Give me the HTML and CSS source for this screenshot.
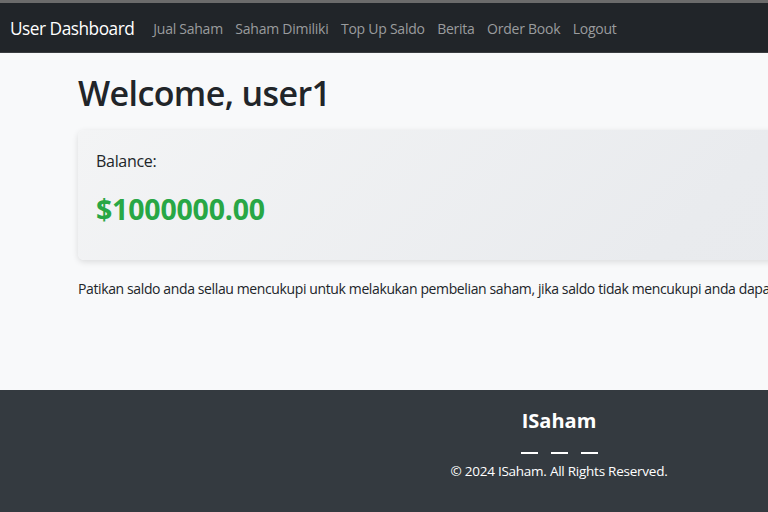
FILE: index.html
```html
<!DOCTYPE html>
<html lang="id">
<head>
<meta charset="utf-8">
<title>User Dashboard</title>
<link rel="stylesheet" href="styles.css">
</head>
<body>
<div class="page">
  <nav class="navbar">
    <a class="brand" href="#">User Dashboard</a>
    <ul class="nav-links">
      <li><a href="#">Jual Saham</a></li>
      <li><a href="#">Saham Dimiliki</a></li>
      <li><a href="#">Top Up Saldo</a></li>
      <li><a href="#">Berita</a></li>
      <li><a href="#">Order Book</a></li>
      <li><a href="#">Logout</a></li>
    </ul>
  </nav>
  <main class="main">
    <h1 class="title">Welcome, user1</h1>
    <div class="card">
      <p class="label">Balance:</p>
      <p class="amount">$1000000.00</p>
    </div>
    <p class="note">Patikan saldo anda sellau mencukupi untuk melakukan pembelian saham, jika saldo tidak mencukupi anda dapat melakukan top up saldo.</p>
  </main>
  <footer class="footer">
    <h2 class="footer-brand">ISaham</h2>
    <div class="socials"><span></span><span></span><span></span></div>
    <p class="copy">© 2024 ISaham. All Rights Reserved.</p>
  </footer>
</div>
</body>
</html>
```
FILE: styles.css
```css
html, body {
  margin: 0;
  padding: 0;
  overflow: hidden;
  background: #f8f9fa;
}
body {
  font-family: "Open Sans", "Noto Sans", sans-serif;
  color: #212529;
}
.page {
  width: 1118px;
  border-top: 3px solid #6b6b6b;
}
.navbar {
  display: flex;
  align-items: center;
  height: 48px;
  background: #212529;
  border-bottom: 1px solid #3a3d40;
  padding: 1px 10px 0;
  box-sizing: content-box;
}
.brand {
  color: #fff;
  text-decoration: none;
  font-size: 17.3px;
  margin-right: 19px;
  letter-spacing: -0.5px;
}
.nav-links {
  display: flex;
  list-style: none;
  margin: 0;
  padding: 0;
  gap: 12.5px;
}
.nav-links a {
  display: block;
  color: #9a9c9e;
  text-decoration: none;
  font-size: 14px;
  letter-spacing: -0.25px;
}
.main {
  padding: 18px 0 0 78px;
  height: 319px;
}
.title {
  margin: 0 0 15px;
  font-size: 34px;
  font-weight: 600;
  line-height: 44px;
  letter-spacing: -0.6px;
}
.card {
  height: 130px;
  box-sizing: border-box;
  padding: 19px 18px;
  border-radius: 6px;
  background: linear-gradient(135deg, #f3f4f5 0%, #e9ebee 60%, #e7e9ec 100%);
  box-shadow: 0 2px 6px rgba(0,0,0,0.12);
}
.label {
  margin: 0;
  font-size: 16px;
  line-height: 24px;
  letter-spacing: -0.3px;
}
.amount {
  margin: 18px 0 0;
  font-size: 28.5px;
  font-weight: 700;
  line-height: 36px;
  color: #28a745;
  letter-spacing: -0.2px;
}
.note {
  margin: 19px 0 0;
  font-size: 14px;
  line-height: 20px;
  white-space: nowrap;
  letter-spacing: -0.38px;
}
.footer {
  background: #343a40;
  color: #fff;
  height: 122px;
  text-align: center;
  padding-top: 18px;
  box-sizing: border-box;
}
.footer-brand {
  margin: 0;
  font-size: 20px;
  font-weight: 700;
  line-height: 26px;
}
.socials {
  display: flex;
  justify-content: center;
  gap: 13px;
  margin-top: 10px;
  height: 10px;
  align-items: flex-end;
}
.socials span {
  width: 17px;
  height: 2px;
  background: #fff;
}
.copy {
  margin: 7px 0 0;
  font-size: 13.5px;
  line-height: 20px;
  letter-spacing: -0.25px;
}
```
